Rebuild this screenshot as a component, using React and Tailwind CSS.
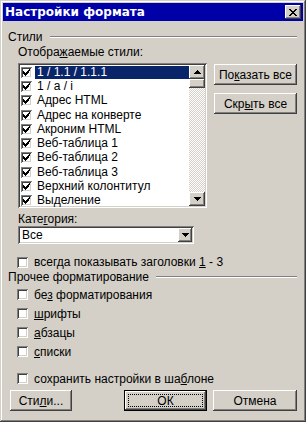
import React from "react";

const font = { fontFamily: '"Liberation Sans", Arial, sans-serif' };
const titleFont = { fontFamily: '"DejaVu Sans", Verdana, sans-serif' };

const raised =
  "bg-[#d4d0c8] shadow-[inset_-1px_-1px_#404040,inset_1px_1px_#fff,inset_-2px_-2px_#808080,inset_2px_2px_#d4d0c8]";
const sunken =
  "shadow-[inset_1px_1px_#808080,inset_-1px_-1px_#fff,inset_2px_2px_#404040,inset_-2px_-2px_#d4d0c8]";

const Check = ({ checked }) => (
  <span className="w-[11px] h-[11px] shrink-0 bg-white flex items-center justify-center shadow-[inset_1px_1px_#808080,inset_-1px_-1px_#fff,inset_2px_2px_#404040,inset_-2px_-2px_#d4d0c8]">
    {checked && (
      <svg width="7" height="7" viewBox="0 0 7 7" shapeRendering="crispEdges">
        <path d="M6 0h1v2h-1zM5 1h1v3h-1zM4 2h1v3h-1zM3 3h1v3h-1zM2 4h1v3h-1zM1 3h1v3h-1zM0 2h1v3h-1z" fill="#000" />
      </svg>
    )}
  </span>
);

const Arrow = ({ down }) => (
  <svg width="7" height="4" viewBox="0 0 7 4" shapeRendering="crispEdges">
    {down ? (
      <path d="M0 0h7v1h-7zM1 1h5v1h-5zM2 2h3v1h-3zM3 3h1v1h-1z" fill="#000" />
    ) : (
      <path d="M3 0h1v1h-1zM2 1h3v1h-3zM1 2h5v1h-5zM0 3h7v1h-7z" fill="#000" />
    )}
  </svg>
);

const GroupHeader = ({ children }) => (
  <div className="h-[14px] flex items-center">
    <span className="leading-[14px] whitespace-nowrap">{children}</span>
    <div className="flex-1 ml-[7px] h-[2px] border-t border-t-[#808080] border-b border-b-white" />
  </div>
);

const CheckRow = ({ children }) => (
  <div className="h-[19px] flex items-center gap-[6px] pl-[9px]">
    <Check />
    <span className="leading-[14px] whitespace-nowrap">{children}</span>
  </div>
);

const styles = [
  "1 / 1.1 / 1.1.1",
  "1 / a / i",
  "Адрес HTML",
  "Адрес на конверте",
  "Акроним HTML",
  "Веб-таблица 1",
  "Веб-таблица 2",
  "Веб-таблица 3",
  "Верхний колонтитул",
  "Выделение",
];

export default function App() {
  return (
    <div
      style={font}
      className="w-[306px] h-[422px] bg-[#d4d0c8] p-[3px] text-[12px] text-black shadow-[inset_-1px_-1px_#404040,inset_1px_1px_#d4d0c8,inset_-2px_-2px_#808080,inset_2px_2px_#fff]"
    >
      {/* title bar */}
      <div className="h-[18px] bg-[#0000a8] flex items-center justify-between pl-[2px] pr-[2px]">
        <span style={titleFont} className="text-white font-bold text-[12px] leading-[18px]">
          Настройки формата
        </span>
        <div className={`w-[16px] h-[14px] flex items-center justify-center ${raised}`}>
          <svg width="8" height="7" viewBox="0 0 8 7" shapeRendering="crispEdges">
            <path d="M0 0h2v1h-2zM6 0h2v1h-2zM1 1h2v1h-2zM5 1h2v1h-2zM2 2h4v1h-4zM3 3h2v1h-2zM2 4h4v1h-4zM1 5h2v1h-2zM5 5h2v1h-2zM0 6h2v1h-2zM6 6h2v1h-2z" fill="#000" />
          </svg>
        </div>
      </div>

      <div className="pl-[5px] pr-[6px]">
        <div className="mt-[9px]">
          <GroupHeader>Стили</GroupHeader>
        </div>

        <div className="pl-[10px]">
          <div className="mt-[1px] h-[14px] leading-[14px]">
            Отобра<u>ж</u>аемые стили:
          </div>

          <div className="mt-[4px] flex">
            {/* list box */}
            <div className={`w-[189px] h-[145px] bg-white p-[2px] flex ${sunken}`}>
              <div className="flex-1">
                {styles.map((s, i) => (
                  <div key={s} className="h-[14.3px] flex items-center pl-[1px]">
                    <Check checked />
                    <span
                      className={`ml-[3px] flex-1 h-[13px] leading-[13px] px-[2px] whitespace-nowrap ${
                        i === 0 ? "bg-[#0a246a] text-white" : ""
                      }`}
                    >
                      {s}
                    </span>
                  </div>
                ))}
              </div>
              {/* scrollbar */}
              <div className="w-[16px] flex flex-col bg-[repeating-conic-gradient(#d4d0c8_0_25%,#fff_0_50%)] bg-[length:2px_2px]">
                <div className={`h-[14px] flex items-center justify-center ${raised}`}>
                  <Arrow />
                </div>
                <div className={`h-[9px] ${raised}`} />
                <div className="flex-1" />
                <div className={`h-[14px] flex items-center justify-center ${raised}`}>
                  <Arrow down />
                </div>
              </div>
            </div>

            <div className="ml-[7px] mt-[1px] flex flex-col gap-[8px]">
              <div className={`w-[83px] h-[21px] flex items-center justify-center whitespace-nowrap ${raised}`}>
                По<u>к</u>азать все
              </div>
              <div className={`w-[83px] h-[21px] flex items-center justify-center whitespace-nowrap ${raised}`}>
                Скр<u>ы</u>ть все
              </div>
            </div>
          </div>

          <div className="mt-[5px] h-[13px] leading-[13px]">
            Кате<u>г</u>ория:
          </div>

          <div className={`w-[176px] h-[18px] bg-white p-[2px] flex items-center ${sunken}`}>
            <span className="flex-1 pl-[2px] leading-[14px]">Все</span>
            <div className={`w-[14px] h-[14px] flex items-center justify-center ${raised}`}>
              <Arrow down />
            </div>
          </div>

          <div className="mt-[11px] h-[14px] flex items-center gap-[6px] -ml-[1px]">
            <Check />
            <span className="leading-[14px] whitespace-nowrap">
              всегда показывать заголовки <u>1</u> - 3
            </span>
          </div>
        </div>

        <div className="mt-[1px]">
          <GroupHeader>Прочее форматирование</GroupHeader>
        </div>

        <div className="mt-[1px]">
          <CheckRow>
            бе<u>з</u> форматирования
          </CheckRow>
          <CheckRow>
            <u>ш</u>рифты
          </CheckRow>
          <CheckRow>
            <u>а</u>бзацы
          </CheckRow>
          <CheckRow>
            <u>с</u>писки
          </CheckRow>
        </div>

        <div className="mt-[8px]">
          <CheckRow>
            сохранить настройки в ша<u>б</u>лоне
          </CheckRow>
        </div>

        <div className="mt-[2px] flex items-center pl-[2px]">
          <div className={`w-[62px] h-[21px] flex items-center justify-center ${raised}`}>
            Сти<u>л</u>и...
          </div>
          <div className="ml-[52px] w-[83px] h-[21px] border border-black">
            <div className={`w-full h-full p-[3px] ${raised}`}>
              <div className="w-full h-full border border-dotted border-black flex items-center justify-center">
                ОК
              </div>
            </div>
          </div>
          <div className={`ml-[6px] w-[84px] h-[21px] flex items-center justify-center ${raised}`}>
            Отмена
          </div>
        </div>
      </div>
    </div>
  );
}
